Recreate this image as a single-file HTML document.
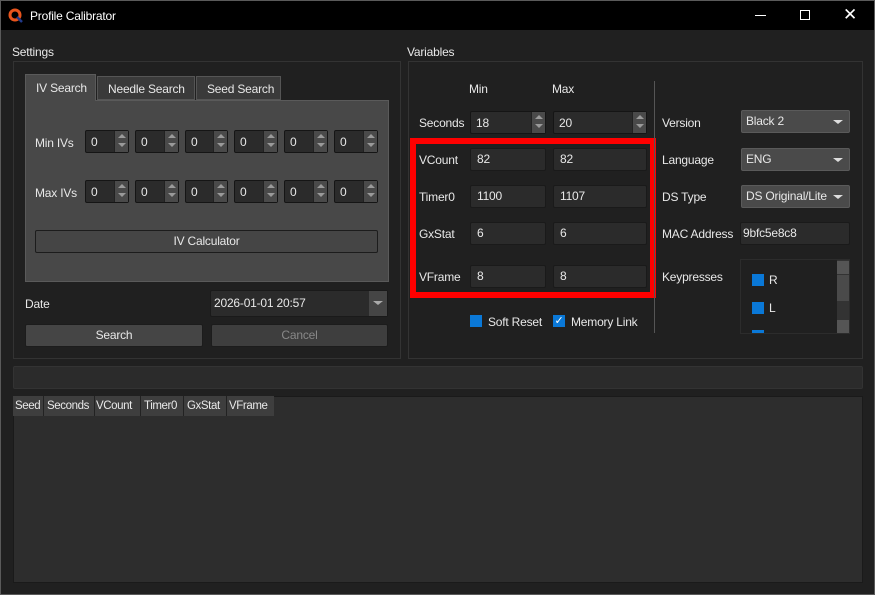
<!DOCTYPE html>
<html><head><style>
*{box-sizing:border-box;margin:0;padding:0}
body{width:875px;height:595px;background:#202020;font-family:"Liberation Sans",sans-serif;font-size:12px;color:#e8e8e8;position:relative;overflow:hidden;letter-spacing:-0.2px}
.a{position:absolute}
.t{position:absolute;white-space:nowrap}
.box{position:absolute;background:#2b2b2b;border:1px solid #1a1a1a;border-radius:2px;padding-left:6px;line-height:20px;font-size:12px}
.spin{position:absolute;background:#2b2b2b;border:1px solid #151515;border-radius:2px;height:23px}
.spin span{position:absolute;left:5px;top:4px}
.spin i{position:absolute;right:0;top:0;width:14px;height:21px;background:#4a4a4a;border-left:1px solid #222}
.spin i:before{content:"";position:absolute;left:3px;top:3px;border:4px solid transparent;border-bottom:4px solid #9a9a9a;border-top:0}
.spin i:after{content:"";position:absolute;left:3px;top:12px;border:4px solid transparent;border-top:4px solid #9a9a9a;border-bottom:0}
.btn{position:absolute;background:#454545;border:1px solid #1c1c1c;border-radius:2px;text-align:center;line-height:20px}
.combo{position:absolute;background:#4a4a4a;border:1px solid #5a5a5a;border-radius:2px;padding-left:4px;line-height:20px}
.combo:after{content:"";position:absolute;right:6px;top:9px;border:5px solid transparent;border-top:4px solid #ddd;border-bottom:0}
.cb{position:absolute;width:12px;height:12px;background:#0a78d7}
.h{position:absolute;top:400px;font-size:11.5px;letter-spacing:-0.4px;white-space:nowrap}
</style></head><body>
<div class="a" style="left:0;top:0;width:875px;height:30px;background:#000"></div>
<svg class="a" style="left:8px;top:8px" width="15" height="15" viewBox="0 0 15 15"><circle cx="7" cy="7" r="5" fill="none" stroke="#e8541c" stroke-width="3"/><path d="M9 9l5 5" stroke="#223a8a" stroke-width="2.5"/></svg>
<div class="t" style="left:30px;top:9px;font-size:12px;color:#fff">Profile Calibrator</div>
<div class="a" style="left:755px;top:15px;width:11px;height:1px;background:#fff"></div>
<div class="a" style="left:800px;top:10px;width:10px;height:10px;border:1px solid #fff"></div>
<div class="t" style="left:843px;top:5px;font-size:17px;color:#fff">✕</div>

<div class="t" style="left:12px;top:45px">Settings</div>
<div class="a" style="left:13px;top:61px;width:388px;height:298px;border:1px solid #333"></div>
<div class="a" style="left:25px;top:100px;width:364px;height:182px;background:#484848;border:1px solid #5a5a5a"></div>
<div class="a" style="left:25px;top:74px;width:71px;height:27px;background:#484848;border:1px solid #5a5a5a;border-bottom:0"></div>
<div class="t" style="left:36px;top:81px">IV Search</div>
<div class="a" style="left:97px;top:76px;width:98px;height:24px;background:#3a3a3a;border:1px solid #555"></div>
<div class="t" style="left:108px;top:82px">Needle Search</div>
<div class="a" style="left:196px;top:76px;width:85px;height:24px;background:#3a3a3a;border:1px solid #555"></div>
<div class="t" style="left:207px;top:82px">Seed Search</div>
<div class="t" style="left:35px;top:136px">Min IVs</div>
<div class="t" style="left:35px;top:186px">Max IVs</div>
<div class="spin" style="left:85px;top:130px;width:44px"><span>0</span><i></i></div>
<div class="spin" style="left:135px;top:130px;width:44px"><span>0</span><i></i></div>
<div class="spin" style="left:185px;top:130px;width:43px"><span>0</span><i></i></div>
<div class="spin" style="left:234px;top:130px;width:44px"><span>0</span><i></i></div>
<div class="spin" style="left:284px;top:130px;width:44px"><span>0</span><i></i></div>
<div class="spin" style="left:334px;top:130px;width:44px"><span>0</span><i></i></div>
<div class="spin" style="left:85px;top:180px;width:44px"><span>0</span><i></i></div>
<div class="spin" style="left:135px;top:180px;width:44px"><span>0</span><i></i></div>
<div class="spin" style="left:185px;top:180px;width:43px"><span>0</span><i></i></div>
<div class="spin" style="left:234px;top:180px;width:44px"><span>0</span><i></i></div>
<div class="spin" style="left:284px;top:180px;width:44px"><span>0</span><i></i></div>
<div class="spin" style="left:334px;top:180px;width:44px"><span>0</span><i></i></div>
<div class="btn" style="left:35px;top:230px;width:343px;height:23px">IV Calculator</div>
<div class="t" style="left:25px;top:297px">Date</div>
<div class="box" style="left:210px;top:290px;width:178px;height:27px;line-height:24px;padding-left:3px">2026-01-01 20:57</div>
<div class="a" style="left:369px;top:291px;width:18px;height:25px;background:#454545"></div>
<div class="a" style="left:373px;top:301px;border:5px solid transparent;border-top:4px solid #aaa;border-bottom:0"></div>
<div class="btn" style="left:25px;top:324px;width:178px;height:23px">Search</div>
<div class="btn" style="left:211px;top:324px;width:177px;height:23px;color:#888;background:#3e3e3e">Cancel</div>

<div class="t" style="left:407px;top:45px">Variables</div>
<div class="a" style="left:408px;top:61px;width:455px;height:298px;border:1px solid #333"></div>
<div class="t" style="left:469px;top:82px">Min</div>
<div class="t" style="left:552px;top:82px">Max</div>
<div class="t" style="left:419px;top:116px">Seconds</div>
<div class="spin" style="left:470px;top:111px;width:76px"><span>18</span><i></i></div>
<div class="spin" style="left:553px;top:111px;width:94px"><span>20</span><i></i></div>
<div class="a" style="left:410px;top:138px;width:246px;height:160px;border:6px solid #ff0000"></div>
<div class="t" style="left:419px;top:153px">VCount</div>
<div class="t" style="left:419px;top:190px">Timer0</div>
<div class="t" style="left:419px;top:227px">GxStat</div>
<div class="t" style="left:419px;top:270px">VFrame</div>
<div class="box" style="left:470px;top:148px;width:76px;height:23px">82</div>
<div class="box" style="left:553px;top:148px;width:94px;height:23px">82</div>
<div class="box" style="left:470px;top:185px;width:76px;height:23px">1100</div>
<div class="box" style="left:553px;top:185px;width:94px;height:23px">1107</div>
<div class="box" style="left:470px;top:222px;width:76px;height:23px">6</div>
<div class="box" style="left:553px;top:222px;width:94px;height:23px">6</div>
<div class="box" style="left:470px;top:265px;width:76px;height:23px">8</div>
<div class="box" style="left:553px;top:265px;width:94px;height:23px">8</div>
<div class="cb" style="left:470px;top:315px"></div>
<div class="t" style="left:488px;top:315px">Soft Reset</div>
<div class="cb" style="left:553px;top:315px;color:#fff;font-size:11px;line-height:12px;text-align:center">✓</div>
<div class="t" style="left:571px;top:315px">Memory Link</div>
<div class="a" style="left:654px;top:81px;width:1px;height:252px;background:#555"></div>
<div class="t" style="left:662px;top:116px">Version</div>
<div class="t" style="left:662px;top:153px">Language</div>
<div class="t" style="left:662px;top:190px">DS Type</div>
<div class="t" style="left:662px;top:227px">MAC Address</div>
<div class="t" style="left:662px;top:270px">Keypresses</div>
<div class="combo" style="left:741px;top:110px;width:109px;height:23px">Black 2</div>
<div class="combo" style="left:741px;top:148px;width:109px;height:23px">ENG</div>
<div class="combo" style="left:741px;top:185px;width:109px;height:23px">DS Original/Lite</div>
<div class="box" style="left:740px;top:222px;width:110px;height:23px;padding-left:2px">9bfc5e8c8</div>
<div class="a" style="left:740px;top:259px;width:110px;height:75px;background:#202020;border:1px solid #2c2c2c;overflow:hidden">
<div class="cb" style="left:11px;top:14px"></div><div class="t" style="left:28px;top:13px">R</div>
<div class="cb" style="left:11px;top:42px"></div><div class="t" style="left:28px;top:41px">L</div>
<div class="cb" style="left:11px;top:70px"></div>
<div class="a" style="left:96px;top:0;width:13px;height:74px;background:#333"></div>
<div class="a" style="left:96px;top:1px;width:13px;height:13px;background:#555"></div>
<div class="a" style="left:96px;top:15px;width:13px;height:26px;background:#4a4a4a"></div>
<div class="a" style="left:96px;top:60px;width:13px;height:13px;background:#555"></div>
</div>

<div class="a" style="left:13px;top:366px;width:850px;height:23px;background:#2b2b2b;border:1px solid #333;border-radius:2px"></div>
<div class="a" style="left:13px;top:396px;width:850px;height:187px;background:#2d2d2d;border:1px solid #1a1a1a"></div>
<div class="a" style="left:13px;top:396px;width:261px;height:20px;background:#3e3e3e"></div>
<div class="h" style="left:15px">Seed</div>
<div class="a" style="left:43px;top:396px;width:1px;height:20px;background:#222"></div>
<div class="h" style="left:47px">Seconds</div>
<div class="a" style="left:94px;top:396px;width:1px;height:20px;background:#222"></div>
<div class="h" style="left:96px">VCount</div>
<div class="a" style="left:140px;top:396px;width:1px;height:20px;background:#222"></div>
<div class="h" style="left:144px">Timer0</div>
<div class="a" style="left:183px;top:396px;width:1px;height:20px;background:#222"></div>
<div class="h" style="left:187px">GxStat</div>
<div class="a" style="left:226px;top:396px;width:1px;height:20px;background:#222"></div>
<div class="h" style="left:229px">VFrame</div>
<div class="a" style="left:0;top:0;width:875px;height:595px;border:1px solid #5a5a5a;pointer-events:none"></div>
</body></html>
